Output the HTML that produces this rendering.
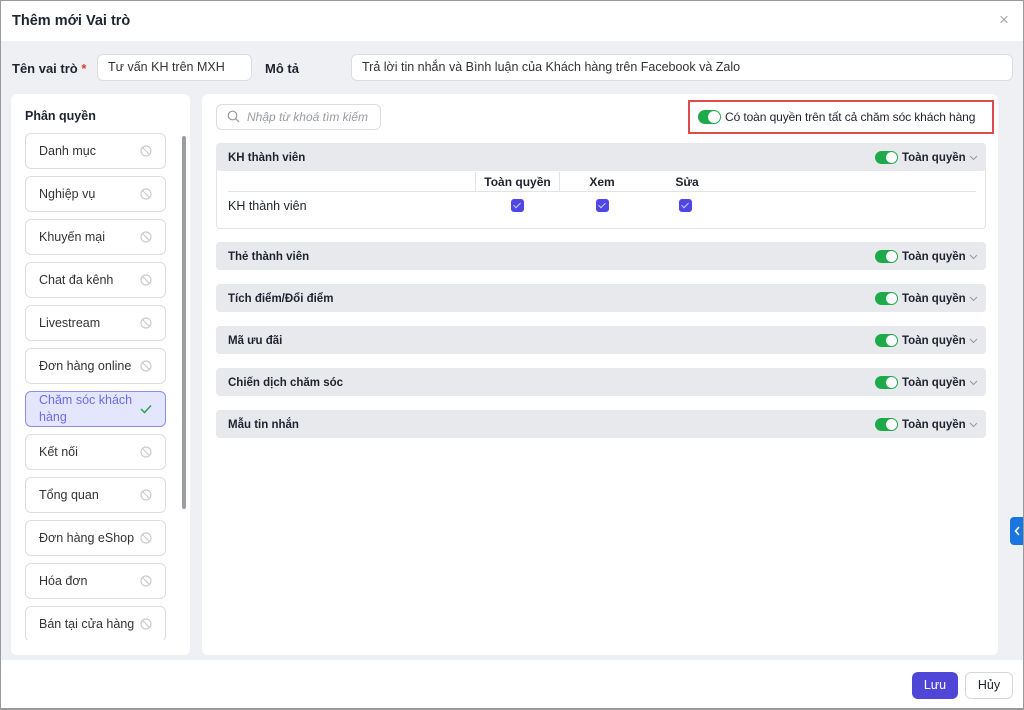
<!DOCTYPE html>
<html><head><meta charset="utf-8"><style>
*{box-sizing:border-box;margin:0;padding:0}
body{width:1024px;height:710px;position:relative;font-family:"Liberation Sans",sans-serif;color:#1f2330;background:#fff;overflow:hidden}
.frame{position:absolute;left:0;top:0;width:1024px;height:710px;border:1px solid #9a9a9a;border-bottom-width:2px}
.abs{position:absolute}
.hdr{left:1px;top:1px;width:1022px;height:40px;background:#fff}
.body{left:1px;top:41px;width:1022px;height:619px;background:#eff0f3}
.lbl{font-size:13px;font-weight:bold}
.inp{background:#fff;border:1px solid #dcdde2;border-radius:6px;font-size:12.5px;color:#333;padding-left:10px;line-height:25px}
.panel{background:#fff;border-radius:6px}
.item{left:25px;width:141px;height:36px;border:1px solid #dcdde2;border-radius:6px;font-size:12.5px;color:#333;padding-left:13px;line-height:35px;background:#fff}
.item svg{position:absolute;right:13px;top:11px}
.sec{left:216px;width:770px;height:28px;background:#e8e9ec;border-radius:4px;font-size:11.5px;font-weight:bold;padding-left:12px;line-height:30px}
.tg{position:absolute;right:88px;top:8px;width:23px;height:13px;background:#1ea94a;border-radius:7px}
.tg:after{content:"";position:absolute;right:1px;top:1px;width:11px;height:11px;border-radius:50%;background:#fff}
.tq{position:absolute;left:686px;top:0;font-size:11.5px;font-weight:bold}
.chev{position:absolute;right:8px;top:12px}
.cb{position:absolute;width:13px;height:13px;background:#4f46e5;border-radius:3px}
.cb:after{content:"";position:absolute;left:4px;top:2px;width:3px;height:6px;border:solid #cfcfff;border-width:0 1.3px 1.3px 0;transform:rotate(45deg)}
</style></head><body>
<div class="abs hdr"></div>
<div class="abs" style="left:12px;top:13px;font-size:14.5px;font-weight:bold">Thêm mới Vai trò</div>
<div class="abs" style="left:999px;top:10px;font-size:17px;color:#aaa">×</div>
<div class="abs body"></div>
<div class="abs lbl" style="left:12px;top:61px">Tên vai trò <span style="color:#e23b3b">*</span></div>
<div class="abs inp" style="left:97px;top:54px;width:155px;height:27px">Tư vấn KH trên MXH</div>
<div class="abs lbl" style="left:265px;top:61px">Mô tả</div>
<div class="abs inp" style="left:351px;top:54px;width:662px;height:27px">Trả lời tin nhắn và Bình luận của Khách hàng trên Facebook và Zalo</div>

<div class="abs panel" style="left:11px;top:94px;width:179px;height:561px"></div>
<div class="abs lbl" style="left:25px;top:109px;font-size:12.5px">Phân quyền</div>
<div class="abs" style="left:182px;top:136px;width:4px;height:373px;background:#9b9da3;border-radius:2px"></div>
<div class="abs" style="left:25px;top:128px;width:145px;height:512px;overflow:hidden">
<div id="list"></div>
</div>
<div class="abs panel" style="left:202px;top:94px;width:796px;height:561px"></div>
<div class="abs inp" style="left:216px;top:104px;width:165px;height:26px;padding-left:30px;font-style:italic;color:#9a9ca4;font-size:12px">Nhập từ khoá tìm kiếm</div>
<svg class="abs" style="left:227px;top:110px" width="13" height="13" viewBox="0 0 13 13"><circle cx="5.5" cy="5.5" r="4.3" fill="none" stroke="#999" stroke-width="1.2"/><path d="M8.7 8.7L12 12" stroke="#999" stroke-width="1.2"/></svg>
<div class="abs" style="left:688px;top:100px;width:306px;height:34px;border:2px solid #e04a4a"></div>
<div class="abs" style="left:698px;top:110px;width:23px;height:14px;background:#1ea94a;border-radius:7px"><div style="position:absolute;right:1px;top:1px;width:12px;height:12px;border-radius:50%;background:#fff"></div></div>
<div class="abs" style="left:725px;top:110px;font-size:12px;letter-spacing:-0.1px">Có toàn quyền trên tất cả chăm sóc khách hàng</div>

<div class="abs" style="left:216px;top:143px;width:770px;height:86px;border:1px solid #e2e3e7;border-radius:4px"></div>
<div class="abs" style="left:228px;top:191px;width:748px;height:1px;background:#e2e3e7"></div>
<div class="abs" style="left:475px;top:172px;width:1px;height:19px;background:#e2e3e7"></div>
<div class="abs" style="left:559px;top:172px;width:1px;height:19px;background:#e2e3e7"></div>
<div class="abs lbl" style="left:476px;top:175px;width:83px;text-align:center;font-size:12px">Toàn quyền</div>
<div class="abs lbl" style="left:560px;top:175px;width:84px;text-align:center;font-size:12px">Xem</div>
<div class="abs lbl" style="left:645px;top:175px;width:84px;text-align:center;font-size:12px">Sửa</div>
<div class="abs" style="left:228px;top:199px;font-size:12.5px">KH thành viên</div>
<div class="cb" style="left:511px;top:199px"></div>
<div class="cb" style="left:596px;top:199px"></div>
<div class="cb" style="left:679px;top:199px"></div>

<div id="secs"></div>

<div class="abs" style="left:1010px;top:517px;width:14px;height:28px;background:#1976e0;border-radius:4px 0 0 4px"><svg width="14" height="28"><path d="M9 10l-3.5 4L9 18" fill="none" stroke="#fff" stroke-width="1.6"/></svg></div>
<div class="abs" style="left:912px;top:672px;width:46px;height:27px;background:#4f46d8;border-radius:6px;color:#fff;font-size:12.5px;text-align:center;line-height:27px">Lưu</div>
<div class="abs" style="left:965px;top:672px;width:48px;height:27px;background:#fff;border:1px solid #d6d7dc;border-radius:6px;font-size:12.5px;text-align:center;line-height:25px">Hủy</div>
<div class="frame"></div>
<script>
var items=["Danh mục","Nghiệp vụ","Khuyến mại","Chat đa kênh","Livestream","Đơn hàng online","Chăm sóc khách hàng","Kết nối","Tổng quan","Đơn hàng eShop","Hóa đơn","Bán tại cửa hàng"];
var ic='<svg width="12" height="12" viewBox="0 0 12 12"><circle cx="6" cy="6" r="5" fill="none" stroke="#ccc" stroke-width="1.2"/><path d="M2.5 2.5l7 7" stroke="#ccc" stroke-width="1.2"/></svg>';
var h="";items.forEach(function(t,i){var top=5+i*43;
if(i==6)h+='<div class="abs item" style="top:'+top+'px;left:0;background:#e3e6fd;border-color:#8b8ff0;color:#6d6be8;line-height:17px;padding-top:0">'+'<div style="width:100px">Chăm sóc khách hàng</div><svg style="position:absolute;right:13px;top:12px" width="12" height="10"><path d="M1 5l3.5 3.5L11 1.5" fill="none" stroke="#2ea44f" stroke-width="1.5"/></svg></div>';
else h+='<div class="abs item" style="top:'+top+'px;left:0">'+t+ic+'</div>';});
document.getElementById("list").innerHTML=h;
var secs=[["KH thành viên",143],["Thẻ thành viên",242],["Tích điểm/Đổi điểm",284],["Mã ưu đãi",326],["Chiến dịch chăm sóc",368],["Mẫu tin nhắn",410]];
var s="";secs.forEach(function(a){s+='<div class="abs sec" style="top:'+a[1]+'px">'+a[0]+'<div class="tg"></div><div class="tq">Toàn quyền</div><svg class="chev" width="9" height="6"><path d="M1 1l3.5 3.5L8 1" fill="none" stroke="#999" stroke-width="1"/></svg></div>';});
document.getElementById("secs").innerHTML=s;
</script>
</body></html>
